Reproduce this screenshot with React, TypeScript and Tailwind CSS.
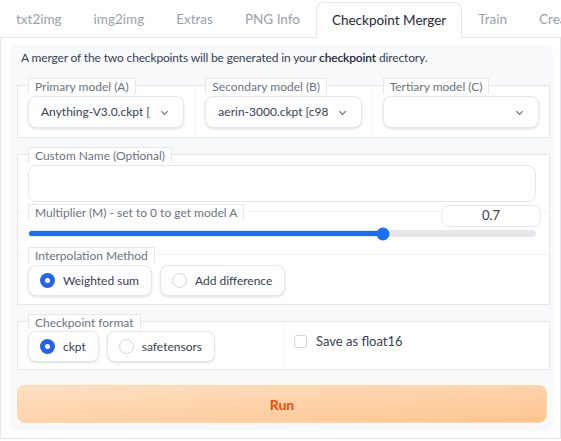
import React, { useState } from 'react'

const tabs = ['txt2img', 'img2img', 'Extras', 'PNG Info', 'Checkpoint Merger', 'Train', 'Create']

function Chevron() {
  return (
    <svg className="h-[11px] w-[11px] shrink-0 text-gray-500" viewBox="0 0 12 12" fill="none" stroke="currentColor" strokeWidth="1.3">
      <path d="M2.5 4.5 6 8l3.5-3.5" />
    </svg>
  )
}

function BlockLabel({ children }: { children: React.ReactNode }) {
  return (
    <span className="absolute -top-[8px] left-[10px] z-10 border border-b-0 border-gray-200 bg-white px-[6px] text-[12px] leading-[15px] whitespace-nowrap text-gray-500">
      {children}
    </span>
  )
}

function Select({ label, value }: { label: string; value: string }) {
  return (
    <div className="relative min-w-0 flex-1 basis-0 px-[10px] pt-[10px] pb-[9px] border-r border-gray-100 last:border-r-0">
      <BlockLabel>{label}</BlockLabel>
      <div className="flex h-[32px] items-center justify-between gap-1 rounded-lg border border-gray-200 bg-white pl-3 pr-[13px] shadow-sm">
        <span className="min-w-0 overflow-hidden text-[12px] whitespace-nowrap text-gray-700">{value}</span>
        <Chevron />
      </div>
    </div>
  )
}

function Radio({ label, checked, onClick }: { label: string; checked: boolean; onClick: () => void }) {
  return (
    <button onClick={onClick} className="flex h-[31px] items-center gap-[8px] rounded-lg border border-gray-200 bg-white pl-[11px] pr-[12px] shadow-sm">
      {checked ? (
        <span className="flex h-[15px] w-[15px] items-center justify-center rounded-full bg-[#2563eb]">
          <span className="h-[5px] w-[5px] rounded-full bg-white" />
        </span>
      ) : (
        <span className="h-[15px] w-[15px] rounded-full border border-gray-300 bg-white" />
      )}
      <span className="text-[12px] text-gray-700">{label}</span>
    </button>
  )
}

export default function App() {
  const [method, setMethod] = useState('Weighted sum')
  const [format, setFormat] = useState('ckpt')
  const [multiplier] = useState(0.7)

  return (
    <div className="h-[441px] w-[561px] overflow-hidden bg-white font-['Lato',sans-serif] text-gray-700">
      {/* tab strip */}
      <div className="flex h-[38px] items-end border-b border-gray-200">
        {tabs.map((t) => {
          const active = t === 'Checkpoint Merger'
          return (
            <div
              key={t}
              className={
                active
                  ? '-mb-px flex h-[36px] items-center rounded-t-lg border border-b-0 border-gray-200 bg-white px-[15px] text-[13.5px] whitespace-nowrap text-gray-800'
                  : 'flex h-[36px] items-center px-4 text-[13.5px] whitespace-nowrap text-gray-400'
              }
            >
              {t}
            </div>
          )
        })}
      </div>

      <div className="h-[401px] border-x border-b border-gray-200 pt-[7px] pl-[8px] pr-[7px]">
        <div className="flex flex-col rounded-lg bg-[#f8f9fb] pl-2 pr-[3px] pt-[4px] pb-2">
          <p className="pl-[4px] text-[12px] leading-[18px] tracking-[-0.15px] text-gray-700">
            A merger of the two checkpoints will be generated in your <b className="font-semibold text-gray-800">checkpoint</b> directory.
          </p>

          {/* model selectors */}
          <div className="mt-[18px] flex border border-gray-200 bg-white">
            <Select label="Primary model (A)" value="Anything-V3.0.ckpt [" />
            <Select label="Secondary model (B)" value="aerin-3000.ckpt [c98" />
            <Select label="Tertiary model (C)" value="" />
          </div>

          {/* name, multiplier, method */}
          <div className="relative mt-[16px] border border-gray-200 bg-white pb-[8px]">
            <BlockLabel>Custom Name (Optional)</BlockLabel>
            <div className="pl-[10px] pr-[13px] pt-[10px]">
              <div className="h-[37px] rounded-lg border border-gray-200 bg-white" />
            </div>

            <div className="relative mt-[9px] border-t border-gray-100 pl-[10px] pr-[13px]">
              <BlockLabel>Multiplier (M) - set to 0 to get model A</BlockLabel>
              <div className="flex justify-end">
                <div className="-mt-[7px] -mr-[5px] flex h-[22px] w-[100px] items-center justify-center rounded-lg border border-gray-200 bg-white text-[13px] text-gray-700">
                  {multiplier}
                </div>
              </div>
              <div className="relative mt-[3px] mb-[17px] h-[7px] rounded-full border border-gray-200 bg-gray-200">
                <div className="h-full rounded-full bg-[#1a6ff1]" style={{ width: `${multiplier * 100}%` }} />
                <div
                  className="absolute top-1/2 h-[13px] w-[13px] -translate-x-1/2 -translate-y-1/2 rounded-full bg-[#1a6ff1]"
                  style={{ left: `${multiplier * 100}%` }}
                />
              </div>
            </div>

            <div className="relative border-t border-gray-100 px-[10px] pt-[10px]">
              <BlockLabel>Interpolation Method</BlockLabel>
              <div className="flex gap-[8px]">
                {['Weighted sum', 'Add difference'].map((m) => (
                  <Radio key={m} label={m} checked={method === m} onClick={() => setMethod(m)} />
                ))}
              </div>
            </div>
          </div>

          {/* output format */}
          <div className="mt-[16px] flex border border-gray-200 bg-white">
            <div className="relative w-[266px] border-r border-gray-100 px-[10px] pt-[9px] pb-[7px]">
              <BlockLabel>Checkpoint format</BlockLabel>
              <div className="flex gap-[8px]">
                {['ckpt', 'safetensors'].map((f) => (
                  <Radio key={f} label={f} checked={format === f} onClick={() => setFormat(f)} />
                ))}
              </div>
            </div>
            <label className="flex h-fit items-center gap-[9px] pl-[10px] pt-[10px]">
              <span className="h-[13px] w-[13px] rounded-[3px] border border-gray-300 bg-white" />
              <span className="text-[13px] text-gray-700">Save as float16</span>
            </label>
          </div>

          <button className="mt-[15px] mr-[3px] h-[38px] rounded-lg border border-orange-200 bg-gradient-to-br from-[#fde0c4] to-[#fec58e] text-[14px] font-bold text-orange-600">
            Run
          </button>
        </div>
      </div>
    </div>
  )
}
